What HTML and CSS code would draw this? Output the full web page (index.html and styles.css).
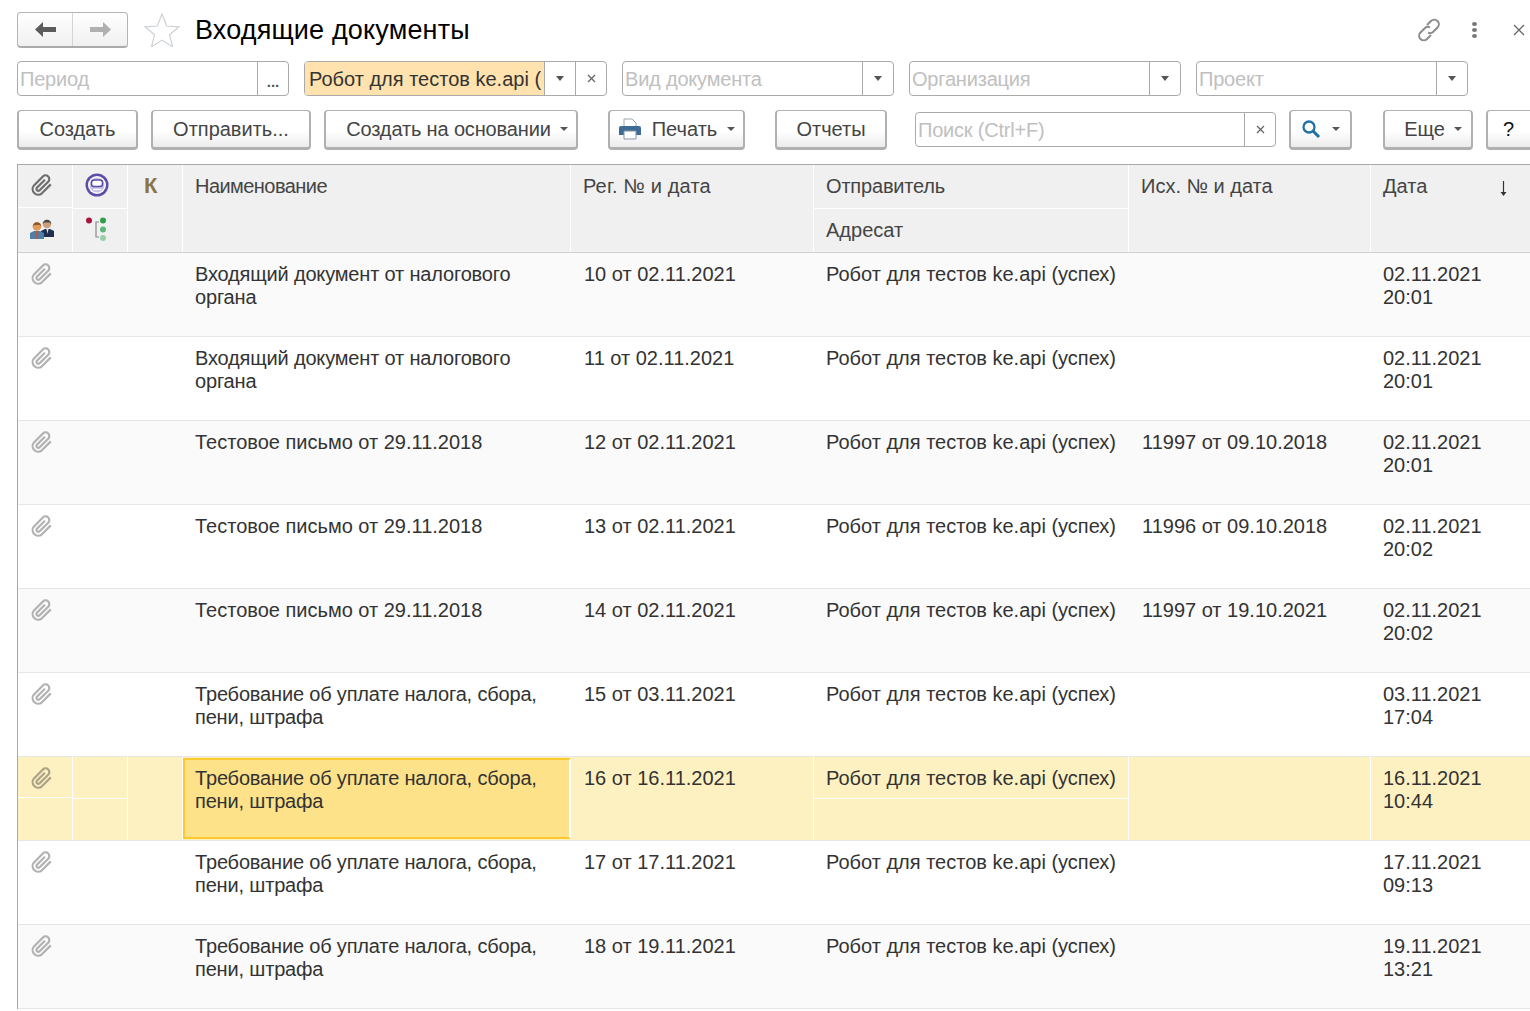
FILE: index.html
```html
<!DOCTYPE html>
<html lang="ru">
<head>
  <meta charset="UTF-8" />
  <title>Входящие документы</title>
  <link rel="stylesheet" href="styles.css">
</head>
<body>
  <svg class="defs" width="0" height="0">
    <symbol id="clip" viewBox="0 0 24 24">
      <path d="M20.800 11.400l-8.900 8.900a5.600 5.600 0 0 1-7.900-7.900l8.900-8.900a3.700 3.700 0 0 1 5.300 5.300l-8.900 8.800a1.900 1.900 0 0 1-2.600-2.600l8.200-8.200" fill="none" stroke="currentColor" stroke-width="2.200"/>
    </symbol>
  </svg>

  <div class="title-bar">
    <div class="nav-group">
      <button class="nav-btn"><svg width="21" height="15" viewBox="0 0 21 15"><path d="M0 7.500L8 0v5h13v5H8v5z" fill="#5c5c5c"/></svg></button>
      <button class="nav-btn"><svg width="21" height="15" viewBox="0 0 21 15"><path d="M21 7.500L13 0v5H0v5h13v5z" fill="#b0b0b0"/></svg></button>
    </div>
    <svg class="star" width="36" height="34" viewBox="0 0 36 34"><path d="M18 1l4.700 12 12.300.8-9.500 7.900 3 12L18 27.100 7.500 33.700l3-12L1 13.800 13.300 13z" fill="none" stroke="#cdd2d6" stroke-width="1.200"/></svg>
    <h1 class="page-title">Входящие документы</h1>
    <div class="win-tools">
      <svg width="26" height="24" viewBox="0 0 26 24"><g fill="none" stroke="#8c8c8c" stroke-width="2"><path d="M11 7l4-4a4.500 4.500 0 0 1 6.500 6.500l-4.500 4.500a4.500 4.500 0 0 1-5 .6"/><path d="M15 17l-4 4a4.500 4.500 0 0 1-6.500-6.500L9 10a4.500 4.500 0 0 1 5-.6"/></g></svg>
      <span class="dots"><i></i><i></i><i></i></span>
      <svg class="win-close" width="12" height="12" viewBox="0 0 12 12"><path d="M1 1l10 10M11 1L1 11" stroke="#666" stroke-width="1.300"/></svg>
    </div>
  </div>

  <div class="filter-bar">
    <div class="field w-272">
      <span class="field-text placeholder">Период</span>
      <span class="field-btn dots-btn">...</span>
    </div>
    <div class="field w-303">
      <span class="field-text filled">Робот для тестов ke.api (</span>
      <span class="field-btn"><i class="caret"></i></span>
      <span class="field-btn"><svg width="9" height="9" viewBox="0 0 9 9"><path d="M1 1l7 7M8 1L1 8" stroke="#666" stroke-width="1.300"/></svg></span>
    </div>
    <div class="field w-272">
      <span class="field-text placeholder">Вид документа</span>
      <span class="field-btn"><i class="caret"></i></span>
    </div>
    <div class="field w-272">
      <span class="field-text placeholder">Организация</span>
      <span class="field-btn"><i class="caret"></i></span>
    </div>
    <div class="field w-272">
      <span class="field-text placeholder">Проект</span>
      <span class="field-btn"><i class="caret"></i></span>
    </div>
  </div>

  <div class="command-bar">
    <button class="btn b-create">Создать</button>
    <button class="btn b-send">Отправить...</button>
    <button class="btn b-base">Создать на основании<i class="caret small"></i></button>
    <button class="btn b-print">
      <svg width="24" height="22" viewBox="0 0 24 22"><path d="M6 1h8l4 4v6H6z" fill="#fff" stroke="#9aa7b2"/><path d="M1 10a2 2 0 0 1 2-2h18a2 2 0 0 1 2 2v7H1z" fill="#3f6b94"/><path d="M6 13h12v8H6z" fill="#fff" stroke="#8496a6"/></svg>
      <span>Печать</span><i class="caret small"></i>
    </button>
    <button class="btn b-reports">Отчеты</button>
    <div class="field search">
      <span class="field-text placeholder">Поиск (Ctrl+F)</span>
      <span class="field-btn"><svg width="9" height="9" viewBox="0 0 9 9"><path d="M1 1l7 7M8 1L1 8" stroke="#666" stroke-width="1.300"/></svg></span>
    </div>
    <button class="btn b-find">
      <svg width="20" height="20" viewBox="0 0 20 20"><circle cx="8" cy="8" r="5.500" fill="none" stroke="#1f6fa8" stroke-width="2.300"/><path d="M12 12l6 6" stroke="#1f6fa8" stroke-width="3"/></svg>
      <i class="caret small"></i>
    </button>
    <button class="btn b-more">Еще<i class="caret small"></i></button>
    <button class="btn b-help">?</button>
  </div>

  <div class="grid">
    <div class="row head">
      <div class="cell stack">
        <div class="sub icon"><svg class="clip dark" width="24" height="24"><use href="#clip"/></svg></div>
        <div class="sub icon people">
          <svg width="24" height="20" viewBox="0 0 24 20">
            <path d="M11 18v-6l4-2h5l4 2v6z" fill="#1f2f4d"/>
            <path d="M16.500 10h2l-1 5z" fill="#e8e8e8"/>
            <circle cx="17" cy="5" r="4.300" fill="#c9a07e"/>
            <path d="M12.700 5a4.300 4.300 0 0 1 8.600 0l-1.500-1.500h-5.600z" fill="#4a4a4a"/>
            <path d="M0 20v-6l4-2h6l4 2v6z" fill="#4f7fa8"/>
            <path d="M6 12h2l-.3 8h-1.400z" fill="#c8502d"/>
            <circle cx="7" cy="7.500" r="4.300" fill="#df9a5c"/>
            <path d="M2.700 7.500a4.300 4.300 0 0 1 8.600 0l-1.500-1.500H4.200z" fill="#8a5a2c"/>
          </svg>
        </div>
      </div>
      <div class="cell stack">
        <div class="sub icon">
          <svg width="24" height="24" viewBox="0 0 24 24"><circle cx="12" cy="12" r="11.500" fill="#5b4ea8"/><circle cx="12" cy="12" r="9" fill="#fff"/><circle cx="12" cy="12" r="7.500" fill="#c9c3e6"/><rect x="6.500" y="7" width="11" height="6.500" rx="2.500" fill="#fff" stroke="#5b4ea8" stroke-width="1.500"/><path d="M8 16.500h8" stroke="#fff" stroke-width="1.200"/></svg>
        </div>
        <div class="sub icon">
          <svg width="24" height="24" viewBox="0 0 24 24"><circle cx="4" cy="3.500" r="3" fill="#a8163c"/><circle cx="18" cy="3.500" r="3" fill="#2f9e4f"/><circle cx="18" cy="12.500" r="3" fill="#5fb77b"/><circle cx="18" cy="21" r="3" fill="#98cfa8"/><path d="M14 5h-3v15h3" fill="none" stroke="#8a8a8a" stroke-width="1.200"/></svg>
        </div>
      </div>
      <div class="cell k-cell">К</div>
      <div class="cell head-name">Наименование</div>
      <div class="cell head-reg">Рег. № и дата</div>
      <div class="cell stack">
        <div class="sub head-sender">Отправитель</div>
        <div class="sub">Адресат</div>
      </div>
      <div class="cell">Исх. № и дата</div>
      <div class="cell date-head">Дата<svg class="sort" width="9" height="15" viewBox="0 0 9 15"><path d="M4.500 0v13" stroke="#333" stroke-width="1.200"/><path d="M1.500 11h6L4.500 15z" fill="#333"/></svg></div>
    </div>

    <div class="row tint">
      <div class="cell icon-top"><svg class="clip" width="24" height="24"><use href="#clip"/></svg></div><div class="cell"></div><div class="cell"></div>
      <div class="cell tight">Входящий документ от налогового органа</div>
      <div class="cell num">10 от 02.11.2021</div>
      <div class="cell">Робот для тестов ke.api (успех)</div>
      <div class="cell"></div>
      <div class="cell">02.11.2021<br>20:01</div>
    </div>
    <div class="row">
      <div class="cell icon-top"><svg class="clip" width="24" height="24"><use href="#clip"/></svg></div><div class="cell"></div><div class="cell"></div>
      <div class="cell tight">Входящий документ от налогового органа</div>
      <div class="cell num">11 от 02.11.2021</div>
      <div class="cell">Робот для тестов ke.api (успех)</div>
      <div class="cell"></div>
      <div class="cell">02.11.2021<br>20:01</div>
    </div>
    <div class="row tint">
      <div class="cell icon-top"><svg class="clip" width="24" height="24"><use href="#clip"/></svg></div><div class="cell"></div><div class="cell"></div>
      <div class="cell">Тестовое письмо от 29.11.2018</div>
      <div class="cell num">12 от 02.11.2021</div>
      <div class="cell">Робот для тестов ke.api (успех)</div>
      <div class="cell num">11997 от 09.10.2018</div>
      <div class="cell">02.11.2021<br>20:01</div>
    </div>
    <div class="row">
      <div class="cell icon-top"><svg class="clip" width="24" height="24"><use href="#clip"/></svg></div><div class="cell"></div><div class="cell"></div>
      <div class="cell">Тестовое письмо от 29.11.2018</div>
      <div class="cell num">13 от 02.11.2021</div>
      <div class="cell">Робот для тестов ke.api (успех)</div>
      <div class="cell num">11996 от 09.10.2018</div>
      <div class="cell">02.11.2021<br>20:02</div>
    </div>
    <div class="row tint">
      <div class="cell icon-top"><svg class="clip" width="24" height="24"><use href="#clip"/></svg></div><div class="cell"></div><div class="cell"></div>
      <div class="cell">Тестовое письмо от 29.11.2018</div>
      <div class="cell num">14 от 02.11.2021</div>
      <div class="cell">Робот для тестов ke.api (успех)</div>
      <div class="cell num">11997 от 19.10.2021</div>
      <div class="cell">02.11.2021<br>20:02</div>
    </div>
    <div class="row">
      <div class="cell icon-top"><svg class="clip" width="24" height="24"><use href="#clip"/></svg></div><div class="cell"></div><div class="cell"></div>
      <div class="cell tight">Требование об уплате налога, сбора, пени, штрафа</div>
      <div class="cell num">15 от 03.11.2021</div>
      <div class="cell">Робот для тестов ke.api (успех)</div>
      <div class="cell"></div>
      <div class="cell">03.11.2021<br>17:04</div>
    </div>
    <div class="row selected">
      <div class="cell stack"><div class="sub icon"><svg class="clip sel-clip" width="24" height="24"><use href="#clip"/></svg></div><div class="sub"></div></div>
      <div class="cell stack"><div class="sub"></div><div class="sub"></div></div>
      <div class="cell"></div>
      <div class="cell tight current">Требование об уплате налога, сбора, пени, штрафа</div>
      <div class="cell num">16 от 16.11.2021</div>
      <div class="cell stack"><div class="sub">Робот для тестов ke.api (успех)</div><div class="sub"></div></div>
      <div class="cell"></div>
      <div class="cell">16.11.2021<br>10:44</div>
    </div>
    <div class="row">
      <div class="cell icon-top"><svg class="clip" width="24" height="24"><use href="#clip"/></svg></div><div class="cell"></div><div class="cell"></div>
      <div class="cell tight">Требование об уплате налога, сбора, пени, штрафа</div>
      <div class="cell num">17 от 17.11.2021</div>
      <div class="cell">Робот для тестов ke.api (успех)</div>
      <div class="cell"></div>
      <div class="cell">17.11.2021<br>09:13</div>
    </div>
    <div class="row tint">
      <div class="cell icon-top"><svg class="clip" width="24" height="24"><use href="#clip"/></svg></div><div class="cell"></div><div class="cell"></div>
      <div class="cell tight">Требование об уплате налога, сбора, пени, штрафа</div>
      <div class="cell num">18 от 19.11.2021</div>
      <div class="cell">Робот для тестов ke.api (успех)</div>
      <div class="cell"></div>
      <div class="cell">19.11.2021<br>13:21</div>
    </div>
  </div>
</body>
</html>
```
FILE: styles.css
```css
html, body {
  height: 100%;
  overflow: hidden;
}

body {
  margin: 0;
  padding: 12px 0 0 17px;
  box-sizing: border-box;
  width: 1530px;
  background: #fff;
  color: #333;
  font-family: "Liberation Sans", Arial, sans-serif;
  font-size: 20px;
  line-height: 23px;
}

.defs {
  display: block;
  height: 0;
}

/* title */
.title-bar {
  display: flex;
  align-items: center;
  height: 36px;
}

.nav-group {
  display: flex;
  width: 111px;
  height: 36px;
  box-sizing: border-box;
  border: 1px solid #b4b4b4;
  border-bottom: 2px solid #ababab;
  border-radius: 4px;
  background: linear-gradient(#fff, #f0f0f0);
  overflow: hidden;
}

.nav-btn {
  flex: 1;
  display: flex;
  align-items: center;
  justify-content: center;
  padding: 0;
  border: 0;
  background: none;
}

.nav-btn + .nav-btn {
  border-left: 1px solid #d4d4d4;
}

.star {
  margin-left: 16px;
  flex: none;
}

.page-title {
  margin: 0 0 0 15px;
  font-size: 27px;
  font-weight: normal;
  letter-spacing: 0.16px;
  line-height: 36px;
  color: #000;
}

.win-tools {
  display: flex;
  align-items: center;
  margin-left: auto;
  width: 114px;
}

.dots {
  display: flex;
  flex-direction: column;
  gap: 2px;
  margin-left: 30px;
}

.dots i {
  width: 5px;
  height: 4px;
  border-radius: 50%;
  background: #777;
}

.win-close {
  margin-left: 36px;
}

/* filters */
.filter-bar {
  display: flex;
  gap: 15px;
  margin-top: 13px;
}

.field {
  display: flex;
  height: 35px;
  box-sizing: border-box;
  border: 1px solid #aaa;
  border-radius: 4px;
  overflow: hidden;
  flex: none;
}

.w-272 { width: 272px; }
.w-303 { width: 303px; }

.field-text {
  flex: 1;
  min-width: 0;
  padding-left: 2px;
  line-height: 35px;
  white-space: nowrap;
  overflow: hidden;
}

.placeholder {
  color: #c0c0c0;
  letter-spacing: -0.2px;
}

.filled {
  padding-left: 4px;
  background: #ffe2ad;
  color: #333;
  letter-spacing: 0;
}

.field-btn {
  display: flex;
  align-items: center;
  justify-content: center;
  flex: none;
  width: 31px;
  box-sizing: border-box;
  border-left: 1px solid #aaa;
}

.field-btn.dots-btn {
  color: #555;
  font-weight: bold;
  font-size: 15px;
  padding-top: 6px;
}

.caret {
  width: 0;
  height: 0;
  border: 4px solid transparent;
  border-top: 5px solid #555;
  border-bottom: 0;
}

.caret.small {
  display: inline-block;
  margin-left: 9px;
  vertical-align: 3px;
  border-width: 4px 4px 0;
  border-top-color: #555;
}

/* commands */
.command-bar {
  display: flex;
  align-items: flex-start;
  margin-top: 14px;
}

.btn {
  display: flex;
  align-items: center;
  justify-content: center;
  flex: none;
  height: 40px;
  padding: 0;
  box-sizing: border-box;
  border: 2px solid #b0b0b0;
  border-top-width: 1px;
  border-bottom-width: 3px;
  border-radius: 4px;
  background: linear-gradient(#fff 55%, #ececec);
  color: #444;
  font: inherit;
}

.b-create { width: 121px; }
.b-send { width: 160px; margin-left: 13px; }
.b-base { width: 254px; margin-left: 13px; padding-left: 12px; letter-spacing: -0.15px; }
.b-print { width: 137px; margin-left: 30px; gap: 10px; }
.b-print .caret { margin-left: 0; }
.b-reports { width: 112px; margin-left: 30px; }
.search { width: 361px; margin: 2px 0 0 28px; }
.b-find { width: 63px; margin-left: 13px; }
.b-find .caret { margin-left: 11px; }
.b-more { width: 90px; margin-left: 31px; padding-left: 10px; }
.b-help { width: 50px; margin-left: 13px; justify-content: flex-start; padding-left: 15px; color: #111; }

/* list */
.grid {
  width: 1513px;
  margin-top: 14px;
  border-top: 1px solid #a8a8a8;
  border-left: 1px solid #a8a8a8;
}

.row {
  display: grid;
  grid-template-columns: 55px 55px 55px 388px 243px 315px 242px 1fr;
  height: 84px;
  box-sizing: border-box;
  border-bottom: 1px solid #e6e6e6;
}

.tint {
  background: #fafafa;
}

.cell {
  padding: 10px 12px 0;
  min-width: 0;
  border-right: 1px solid transparent;
}

.num {
  padding-left: 13px;
}

.tight {
  letter-spacing: -0.17px;
}

.head {
  height: 88px;
  background: #f0f0f0;
  border-bottom-color: #cfcfcf;
  color: #444;
}

.head .cell {
  border-right-color: #fff;
}

.head-name {
  letter-spacing: -0.55px;
}

.head-reg {
  letter-spacing: 0.16px;
}

.head-sender {
  letter-spacing: -0.18px;
}

.selected {
  background: #fdf1c1;
}

.selected .cell {
  border-right-color: #fff;
}

.stack {
  display: flex;
  flex-direction: column;
  padding: 0;
}

.sub {
  flex: 1;
  padding: 10px 12px 0;
}

.sub + .sub {
  border-top: 1px solid #fff;
}

.sub.icon {
  padding: 8px 0 0 12px;
}

.sub.people {
  padding-top: 11px;
}

.icon-top {
  padding: 9px 0 0 12px;
}

.clip {
  display: block;
  color: #b2b2b2;
}

.clip.dark {
  color: #6e6e6e;
}

.clip.sel-clip {
  margin-top: 1px;
  color: #aaa386;
}

.k-cell {
  color: #8c7444;
  font-size: 22px;
  font-weight: bold;
  padding: 9px 0 0 16px;
}

.date-head {
  display: flex;
  justify-content: space-between;
}

.sort {
  margin: 6px 10px 0 0;
}

.current {
  margin: 1px 0;
  background: #fde28a;
  border: 2px solid #fdc92c;
  padding: 7px 10px 0;
}
```
